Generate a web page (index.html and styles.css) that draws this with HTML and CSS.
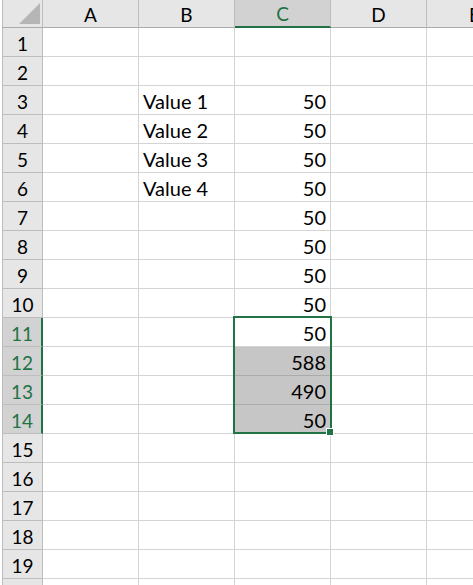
FILE: index.html
```html
<!doctype html>
<html>
<head>
	<title>Sheet1</title>
	<meta charset="utf-8" />
	<link rel="stylesheet" href="styles.css">
</head>
<body>
	<div class="sheet">
		<div class="row head">
			<div class="corner">
				<svg width="21" height="21" viewBox="0 0 21 21"><polygon points="21,0 21,21 0,21" fill="#b6b6b6"/></svg>
			</div>
			<div class="col">A</div>
			<div class="col">B</div>
			<div class="col active">C</div>
			<div class="col">D</div>
			<div class="col">E</div>
		</div>
		<div class="row"><div class="num">1</div><div class="cell"></div><div class="cell"></div><div class="cell"></div><div class="cell"></div><div class="cell"></div></div>
		<div class="row"><div class="num">2</div><div class="cell"></div><div class="cell"></div><div class="cell"></div><div class="cell"></div><div class="cell"></div></div>
		<div class="row"><div class="num">3</div><div class="cell"></div><div class="cell text">Value 1</div><div class="cell val">50</div><div class="cell"></div><div class="cell"></div></div>
		<div class="row"><div class="num">4</div><div class="cell"></div><div class="cell text">Value 2</div><div class="cell val">50</div><div class="cell"></div><div class="cell"></div></div>
		<div class="row"><div class="num">5</div><div class="cell"></div><div class="cell text">Value 3</div><div class="cell val">50</div><div class="cell"></div><div class="cell"></div></div>
		<div class="row"><div class="num">6</div><div class="cell"></div><div class="cell text">Value 4</div><div class="cell val">50</div><div class="cell"></div><div class="cell"></div></div>
		<div class="row"><div class="num">7</div><div class="cell"></div><div class="cell"></div><div class="cell val">50</div><div class="cell"></div><div class="cell"></div></div>
		<div class="row"><div class="num">8</div><div class="cell"></div><div class="cell"></div><div class="cell val">50</div><div class="cell"></div><div class="cell"></div></div>
		<div class="row"><div class="num">9</div><div class="cell"></div><div class="cell"></div><div class="cell val">50</div><div class="cell"></div><div class="cell"></div></div>
		<div class="row"><div class="num">10</div><div class="cell"></div><div class="cell"></div><div class="cell val">50</div><div class="cell"></div><div class="cell"></div></div>
		<div class="row"><div class="num active">11</div><div class="cell"></div><div class="cell"></div><div class="cell val">50</div><div class="cell"></div><div class="cell"></div></div>
		<div class="row"><div class="num active">12</div><div class="cell"></div><div class="cell"></div><div class="cell val picked">588</div><div class="cell"></div><div class="cell"></div></div>
		<div class="row"><div class="num active">13</div><div class="cell"></div><div class="cell"></div><div class="cell val picked">490</div><div class="cell"></div><div class="cell"></div></div>
		<div class="row"><div class="num active">14</div><div class="cell"></div><div class="cell"></div><div class="cell val picked">50</div><div class="cell"></div><div class="cell"></div></div>
		<div class="row"><div class="num">15</div><div class="cell"></div><div class="cell"></div><div class="cell"></div><div class="cell"></div><div class="cell"></div></div>
		<div class="row"><div class="num">16</div><div class="cell"></div><div class="cell"></div><div class="cell"></div><div class="cell"></div><div class="cell"></div></div>
		<div class="row"><div class="num">17</div><div class="cell"></div><div class="cell"></div><div class="cell"></div><div class="cell"></div><div class="cell"></div></div>
		<div class="row"><div class="num">18</div><div class="cell"></div><div class="cell"></div><div class="cell"></div><div class="cell"></div><div class="cell"></div></div>
		<div class="row"><div class="num">19</div><div class="cell"></div><div class="cell"></div><div class="cell"></div><div class="cell"></div><div class="cell"></div></div>
		<div class="row"><div class="num"></div><div class="cell"></div><div class="cell"></div><div class="cell"></div><div class="cell"></div><div class="cell"></div></div>

		<div class="selection"><span class="handle"></span></div>
	</div>
</body>
</html>
```

FILE: styles.css
```css
html, body {
	margin: 0;
	padding: 0;
	background: #fff;
	overflow: hidden;
}

.sheet {
	position: relative;
	width: 473px;
	height: 585px;
	overflow: hidden;
	font-family: "Lato", "Liberation Sans", sans-serif;
	font-size: 20px;
	color: #000;
}

.row {
	display: grid;
	grid-template-columns: 43px repeat(5, 96px);
	height: 29px;
}

.row.head {
	height: 28px;
}

.row > div {
	box-sizing: border-box;
	border-right: 1px solid #d4d4d4;
	border-bottom: 1px solid #d4d4d4;
}

.corner, .col, .num {
	background: #e6e6e6;
}

.corner, .num {
	margin-left: 2px;
	border-left: 1px solid #bdbdbd;
}

.row > .corner, .row > .col, .row > .num {
	border-right-color: #bdbdbd;
	border-bottom-color: #bdbdbd;
}

.row > .corner, .row > .col {
	border-bottom-color: #ababab;
}

.corner {
	display: flex;
	justify-content: flex-end;
	align-items: flex-end;
	padding: 0 2px 3px 0;
}

.col {
	display: flex;
	justify-content: center;
	align-items: center;
	font-size: 19px;
	padding-top: 1px;
}

.num {
	display: flex;
	justify-content: center;
	align-items: center;
	font-size: 19px;
	padding-top: 2px;
}

.row > .col.active {
	background: #d2d2d2;
	color: #217346;
	border-bottom: 2px solid #217346;
}

.row > .num.active {
	background: #d2d2d2;
	color: #217346;
	border-right: 2px solid #217346;
}

.cell {
	display: flex;
	align-items: center;
	padding: 2px 4px 0 4px;
	white-space: nowrap;
}

.cell.val {
	justify-content: flex-end;
}

.row > .cell.picked {
	background: #c6c6c6;
	border-bottom-color: #ababab;
}

.selection {
	position: absolute;
	left: 233px;
	top: 316px;
	width: 99px;
	height: 118px;
	box-sizing: border-box;
	border: 2px solid #217346;
}

.handle {
	position: absolute;
	right: -4px;
	bottom: -4px;
	width: 8px;
	height: 8px;
	box-sizing: border-box;
	background: #217346;
	border: 1px solid #fff;
}
```
